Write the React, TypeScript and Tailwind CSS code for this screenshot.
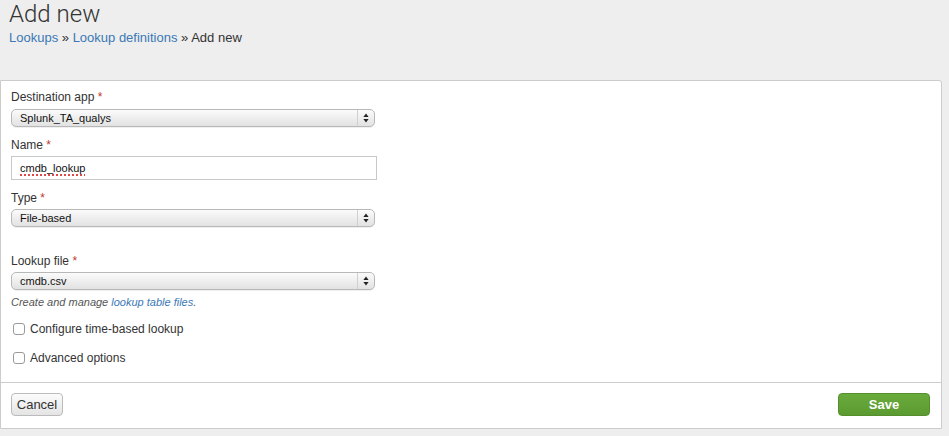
import React from "react";

function Arrows() {
  return (
    <svg width="6" height="10" viewBox="0 0 6 10" className="block">
      <path d="M3 0.5 L5.6 4 L0.4 4 Z" fill="#222" />
      <path d="M3 9.5 L5.6 6 L0.4 6 Z" fill="#222" />
    </svg>
  );
}

function Select({ value }: { value: string }) {
  return (
    <div className="flex h-[18px] w-[364px] items-stretch rounded-[5px] border border-[#b8b8b8] bg-gradient-to-b from-[#fbfbfb] to-[#e2e2e2] shadow-[0_1px_0_rgba(0,0,0,0.06)]">
      <div className="flex flex-1 items-center pl-[8px] text-[11px] leading-none text-[#111]">{value}</div>
      <div className="flex w-[17px] items-center justify-center border-l border-[#d0d0d0]">
        <Arrows />
      </div>
    </div>
  );
}

function Label({ text }: { text: string }) {
  return (
    <div className="h-[18px] text-[12px] leading-[18px] text-[#333]">
      {text} <span className="text-[#c0392b]">*</span>
    </div>
  );
}

function Check({ text }: { text: string }) {
  return (
    <label className="flex h-[16px] items-center gap-[5px] pl-[2px]">
      <span className="block h-[12px] w-[12px] rounded-[3px] border border-[#9a9a9a] bg-white" />
      <span className="text-[12px] leading-[16px] text-[#333]">{text}</span>
    </label>
  );
}

export default function App() {
  return (
    <div className="h-[436px] w-full overflow-hidden bg-[#eeeeee] font-['Liberation_Sans',Arial,sans-serif] text-[#333]">
      <div className="h-[80px] pl-[9px]">
        <h1 className="font-['Roboto',sans-serif] text-[24px] font-light leading-[28px] text-[#333]">Add new</h1>
        <div className="mt-[1px] text-[13px] leading-[18px]">
          <a className="text-[#3b78b5]">Lookups</a>
          <span className="text-[#333]"> » </span>
          <a className="text-[#3b78b5]">Lookup definitions</a>
          <span className="text-[#333]"> » Add new</span>
        </div>
      </div>

      <div className="flex h-[349px] w-[942px] flex-col rounded-tr-[3px] border border-[#cccccc] bg-white">
        <div className="flex h-[301px] flex-col pl-[10px] pt-[7px]">
          <Label text="Destination app" />
          <div className="mt-[3px]">
            <Select value="Splunk_TA_qualys" />
          </div>

          <div className="mt-[9px]">
            <Label text="Name" />
          </div>
          <div className="mt-[2px] flex h-[24px] w-[366px] items-center border border-[#c8c8c8] bg-white pl-[8px] text-[11px] text-[#111]">
            <span className="underline decoration-[#e04848] decoration-dotted decoration-2 underline-offset-[3px]">cmdb_lookup</span>
          </div>

          <div className="mt-[9px]">
            <Label text="Type" />
          </div>
          <div className="mt-[2px]">
            <Select value="File-based" />
          </div>

          <div className="mt-[25px]">
            <Label text="Lookup file" />
          </div>
          <div className="mt-[2px]">
            <Select value="cmdb.csv" />
          </div>

          <div className="mt-[5px] text-[11px] italic leading-[14px] text-[#555]">
            Create and manage <a className="text-[#3b78b5]">lookup table files</a>.
          </div>

          <div className="mt-[12px]">
            <Check text="Configure time-based lookup" />
          </div>
          <div className="mt-[13px]">
            <Check text="Advanced options" />
          </div>
        </div>

        <div className="flex flex-1 items-start justify-between border-t border-[#cccccc] pl-[10px] pr-[11px] pt-[10px]">
          <button className="h-[23px] w-[52px] rounded-[4px] border border-[#bbbbbb] bg-gradient-to-b from-[#fcfcfc] to-[#e4e4e4] text-[13px] leading-none text-[#333]">
            Cancel
          </button>
          <button className="h-[23px] w-[92px] rounded-[4px] border border-[#558f2c] bg-gradient-to-b from-[#6aab3d] to-[#5b9a30] text-[13px] font-bold leading-none text-white">
            Save
          </button>
        </div>
      </div>
    </div>
  );
}
